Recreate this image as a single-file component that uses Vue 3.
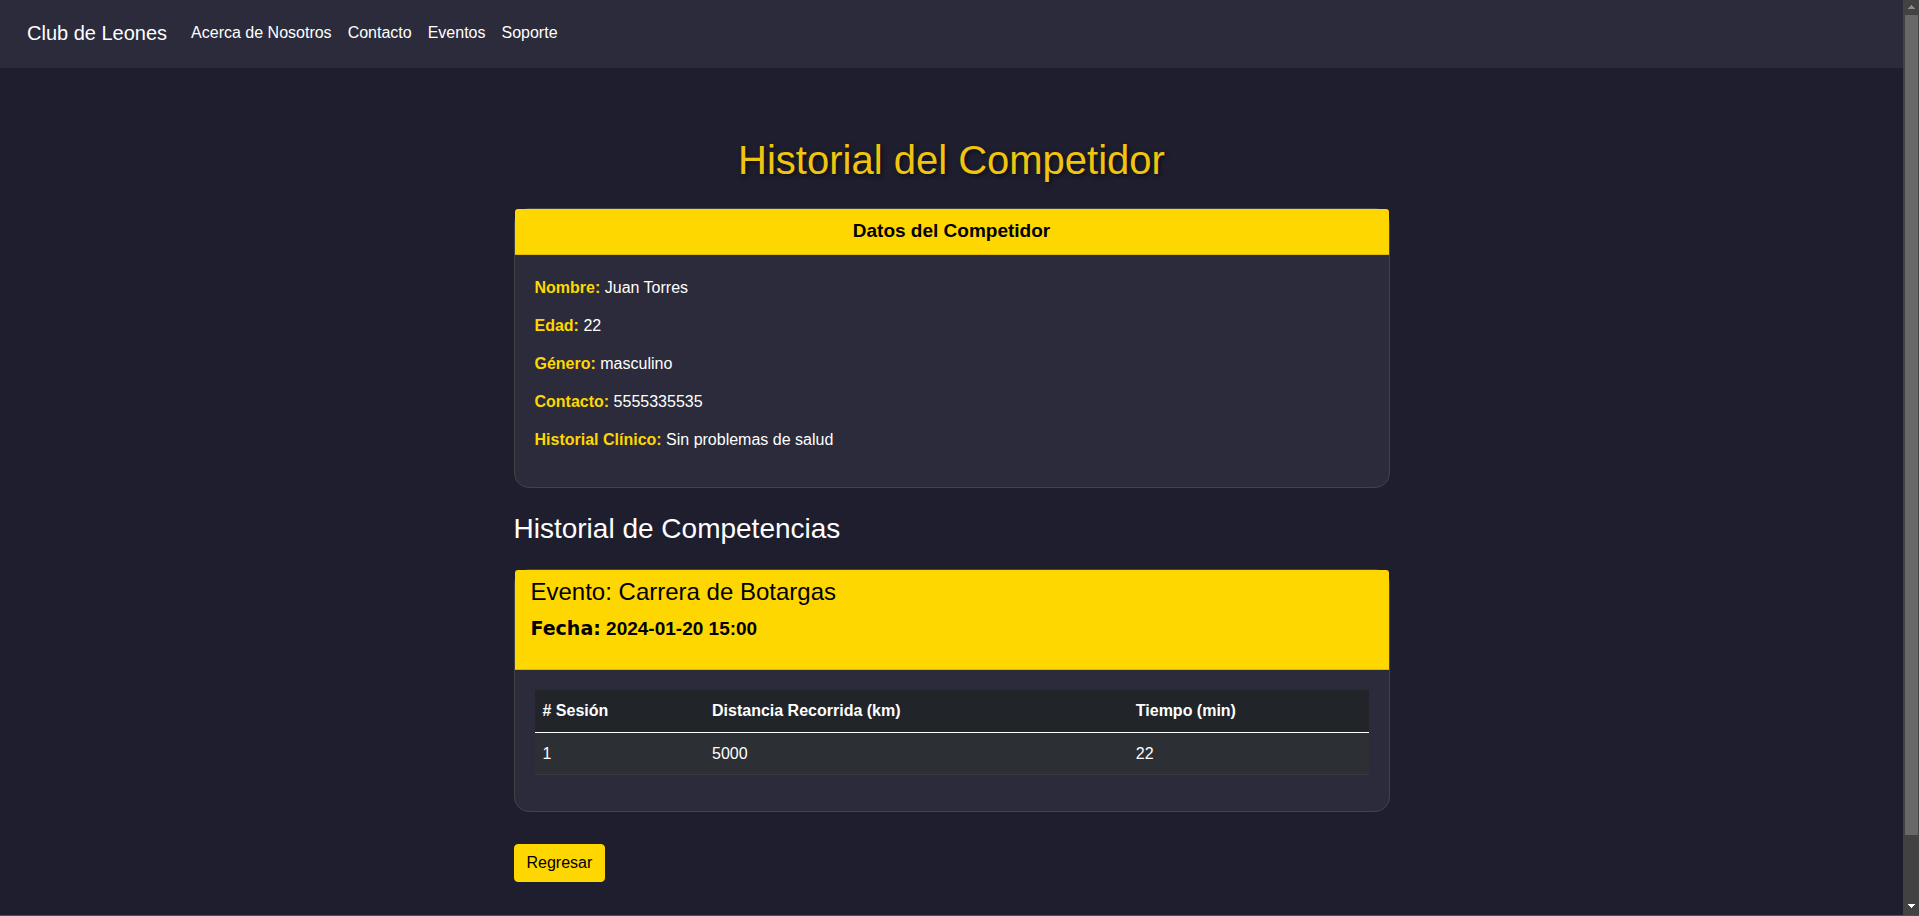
<script setup>
const links = ['Acerca de Nosotros', 'Contacto', 'Eventos', 'Soporte']
const datos = [
  ['Nombre', 'Juan Torres'],
  ['Edad', '22'],
  ['Género', 'masculino'],
  ['Contacto', '5555335535'],
  ['Historial Clínico', 'Sin problemas de salud'],
]
const sesiones = [{ numero: 1, distancia: 5000, tiempo: 22 }]
</script>

<template>
  <div class="window">
    <div class="page">
      <nav class="navbar">
        <a class="brand" href="#">Club de Leones</a>
        <ul class="nav-links">
          <li v-for="link in links" :key="link"><a href="#">{{ link }}</a></li>
        </ul>
      </nav>

      <main class="container">
        <h1>Historial del Competidor</h1>

        <section class="card">
          <div class="card-header centered">Datos del Competidor</div>
          <div class="card-body datos">
            <p v-for="[label, value] in datos" :key="label">
              <strong>{{ label }}:</strong> {{ value }}
            </p>
          </div>
        </section>

        <h2>Historial de Competencias</h2>

        <section class="card">
          <div class="card-header">
            <h3>Evento: Carrera de Botargas</h3>
            <p class="fecha"><strong>Fecha:</strong> 2024-01-20 15:00</p>
          </div>
          <div class="card-body">
            <table>
              <thead>
                <tr>
                  <th scope="col"># Sesión</th>
                  <th scope="col">Distancia Recorrida (km)</th>
                  <th scope="col">Tiempo (min)</th>
                </tr>
              </thead>
              <tbody>
                <tr v-for="s in sesiones" :key="s.numero">
                  <td>{{ s.numero }}</td>
                  <td>{{ s.distancia }}</td>
                  <td>{{ s.tiempo }}</td>
                </tr>
              </tbody>
            </table>
          </div>
        </section>

        <button type="button" class="btn">Regresar</button>
      </main>
    </div>

    <div class="scrollbar" aria-hidden="true">
      <svg class="arrow" viewBox="0 0 16 15"><path d="M8 5h1v1h1v1h1v1h1v1H5V8h1V7h1V6h1z" fill="#8b8b8b" /></svg>
      <div class="thumb"></div>
      <div class="track"></div>
      <svg class="arrow" viewBox="0 0 16 15"><path d="M5 4h7v1h-1v1h-1v1H9v1H8V7H7V6H6V5H5z" fill="#ffffff" /></svg>
    </div>
  </div>
</template>

<style>
body {
  margin: 0;
  background: #1e1e2e;
}
</style>

<style scoped>
* {
  box-sizing: border-box;
}

.window {
  display: flex;
  height: 100vh;
  overflow: hidden;
  border-bottom: 1px solid #5c4a50;
  background: #1e1e2e;
  color: #ffffff;
  font-family: "Liberation Sans", Arial, sans-serif;
  font-size: 16px;
  line-height: 24px;
}

.page {
  flex: 1;
  min-width: 0;
}

.navbar {
  display: flex;
  align-items: center;
  padding: 13px 27px 15px;
  background: #2b2b3b;
}

.navbar a {
  color: #ffffff;
  text-decoration: none;
}

.brand {
  margin-right: 16px;
  font-size: 20px;
  line-height: 30px;
}

.nav-links {
  display: flex;
  margin: 0;
  padding: 0;
  list-style: none;
}

.nav-links a {
  display: block;
  padding: 8px;
}

.container {
  max-width: 900px;
  margin: 0 auto;
  padding: 68px 12px 32px;
}

h1,
h2,
h3 {
  margin: 0;
  font-weight: 400;
}

h1 {
  margin-bottom: 24px;
  color: #f1c40f;
  font-size: 40px;
  line-height: 48px;
  text-align: center;
  text-shadow: 2px 2px 4px rgba(0, 0, 0, 0.5);
}

h2 {
  margin: 24px 0;
  font-size: 28px;
  line-height: 33px;
}

.card {
  border: 1px solid #444444;
  border-radius: 15px;
  background: #2b2b3b;
}

.card-header {
  padding: 7px 16px 9px;
  border-bottom: 1px solid rgba(0, 0, 0, 0.13);
  border-radius: 3px 3px 0 0;
  background: #ffd700;
  color: #000000;
  font-size: 19px;
  font-weight: 700;
  line-height: 29px;
}

.centered {
  text-align: center;
}

h3 {
  margin-bottom: 8px;
  font-size: 24px;
  line-height: 29px;
}

.fecha {
  margin: 0 0 17px;
}

.fecha strong {
  font-family: "DejaVu Sans", "Liberation Sans", sans-serif;
  font-weight: 900;
}

.card-body {
  padding: 20px 20px 36px;
}

.datos {
  padding: 22px 20px 20px;
}

.datos p {
  margin: 0 0 16px;
  line-height: 22px;
}

.datos strong {
  color: #ffd700;
}

table {
  width: 100%;
  border-collapse: separate;
  border-spacing: 0;
}

th,
td {
  padding: 8px;
  text-align: left;
}

th {
  border-bottom: 1px solid #ffffff;
  background: #212529;
  line-height: 26px;
}

td {
  border-bottom: 1px solid #373b3e;
  background: #2c3034;
  line-height: 25px;
}

.btn {
  display: block;
  margin-top: 32px;
  padding: 6px 12px;
  border: 1px solid #ffd700;
  border-radius: 4px;
  background: #ffd700;
  color: #000000;
  font-family: inherit;
  font-size: 16px;
  line-height: 24px;
  cursor: pointer;
}

.scrollbar {
  display: flex;
  flex-direction: column;
  width: 16px;
  background: #424242;
}

.arrow {
  flex: none;
  width: 16px;
  height: 15px;
}

.thumb {
  flex: 820;
  margin: 0 1px 0 2px;
  background: #686868;
}

.track {
  flex: 65;
}
</style>
